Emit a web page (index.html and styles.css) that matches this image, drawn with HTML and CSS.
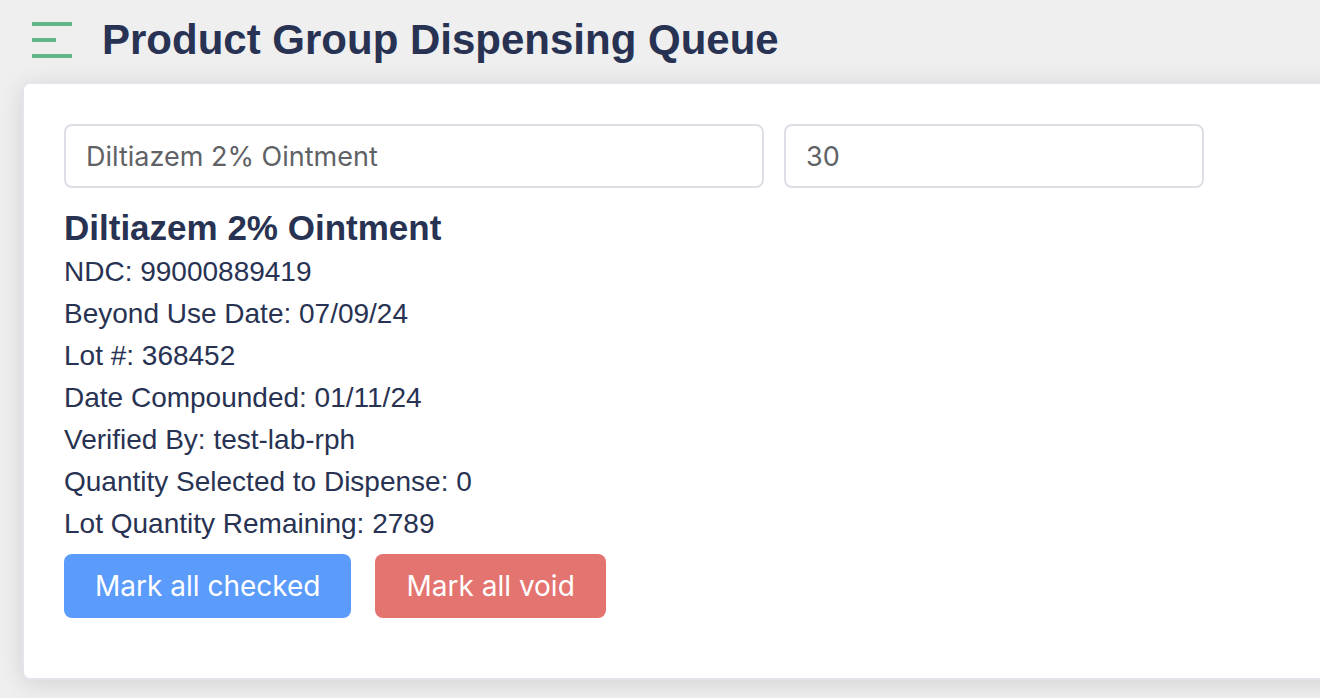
FILE: index.html
```html
<!DOCTYPE html>
<html lang="en">
<head>
<meta charset="utf-8">
<title>Product Group Dispensing Queue</title>
<link rel="stylesheet" href="styles.css">
</head>
<body>
<header class="page-header">
  <button class="menu-button" type="button" aria-label="Toggle menu">
    <svg width="40" height="36" viewBox="0 0 40 36" fill="#64b587" aria-hidden="true"><path d="M0 0h40v4H0zM0 16h24v4H0zM0 32h40v4H0z"/></svg>
  </button>
  <h1 class="page-title">Product Group Dispensing Queue</h1>
</header>
<main class="card">
  <form class="filters">
    <input class="field field-product" type="text" aria-label="Product" value="Diltiazem 2% Ointment">
    <input class="field field-quantity" type="text" aria-label="Quantity" value="30">
  </form>
  <section class="details">
    <h2 class="product-name">Diltiazem 2% Ointment</h2>
    <p class="detail">NDC: 99000889419</p>
    <p class="detail">Beyond Use Date: 07/09/24</p>
    <p class="detail">Lot #: 368452</p>
    <p class="detail">Date Compounded: 01/11/24</p>
    <p class="detail">Verified By: test-lab-rph</p>
    <p class="detail">Quantity Selected to Dispense: 0</p>
    <p class="detail">Lot Quantity Remaining: 2789</p>
  </section>
  <div class="actions">
    <button class="button button-primary" type="button">Mark all checked</button>
    <button class="button button-danger" type="button">Mark all void</button>
  </div>
</main>
</body>
</html>
```
FILE: styles.css
```css
* {
  box-sizing: border-box;
}

body {
  margin: 0;
  overflow-x: hidden;
  background: #efefef;
  color: #283252;
  font-family: "Liberation Sans", Arial, sans-serif;
}

.page-header {
  display: flex;
  align-items: center;
  gap: 30px;
  padding: 8px 32px 10px;
}

.menu-button {
  display: flex;
  padding: 0;
  border: 0;
  background: none;
}

.page-title {
  margin: 0;
  font-size: 42px;
  line-height: 64px;
}

/* The card runs past the right edge of the window. */
.card {
  margin: 0 -40px 18px 22px;
  padding: 40px 40px 60px;
  border: 2px solid #e4e4ea;
  border-radius: 8px;
  background: #fff;
  box-shadow: 0 4px 24px rgba(0, 0, 0, 0.12);
}

.filters {
  display: flex;
  gap: 20px;
}

.field {
  min-width: 0;
  height: 64px;
  padding: 0 20px;
  border: 2px solid #dcdfe6;
  border-radius: 8px;
  background: #fff;
  color: #606266;
  font-family: Inter, sans-serif;
  font-size: 27px;
}

.field-product {
  flex: 0 1 700px;
}

.field-quantity {
  flex: 0 1 420px;
}

.details {
  padding: 17px 0 9px;
}

.product-name {
  margin: 0;
  font-size: 35px;
  line-height: 46px;
}

.detail {
  margin: 0;
  font-size: 28px;
  line-height: 42px;
}

.actions {
  display: flex;
  gap: 24px;
}

.button {
  height: 64px;
  padding: 0 31px;
  border: 0;
  border-radius: 8px;
  color: #fff;
  font-family: Inter, sans-serif;
  font-size: 28px;
}

.button-primary {
  background: #5b9bfb;
}

.button-danger {
  background: #e47470;
}
```
